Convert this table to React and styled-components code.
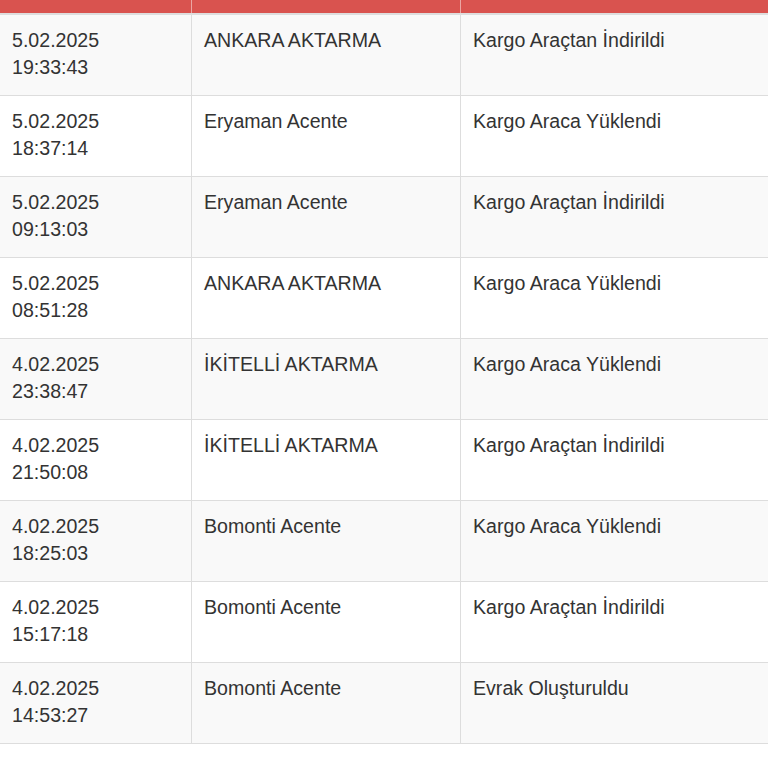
import React from "react";
import styled, { createGlobalStyle } from "styled-components";

const GlobalStyle = createGlobalStyle`
  html, body {
    margin: 0;
    padding: 0;
    background: #fff;
  }
  body {
    font-family: "Liberation Sans", Arial, sans-serif;
  }
`;

const Table = styled.div`
  width: 768px;
  display: flex;
  flex-direction: column;
`;

const HeaderRow = styled.div`
  display: grid;
  grid-template-columns: 191px 269px 1fr;
  height: 13px;
  border-bottom: 2px solid #dedede;
`;

const HeaderCell = styled.div`
  background: #d9534f;
  border-left: ${(p) => (p.$first ? "none" : "1px solid #eba6a3")};
`;

const Row = styled.div`
  display: grid;
  grid-template-columns: 191px 269px 1fr;
  background: ${(p) => (p.$odd ? "#f9f9f9" : "#ffffff")};
  border-bottom: 1px solid #dddddd;
`;

const Cell = styled.div`
  padding: 12px 12px 14px;
  min-height: 54px;
  font-size: 19.6px;
  line-height: 27px;
  color: #333;
  border-left: ${(p) => (p.$first ? "none" : "1px solid #dddddd")};
`;

const rows = [
  ["5.02.2025", "19:33:43", "ANKARA AKTARMA", "Kargo Araçtan İndirildi"],
  ["5.02.2025", "18:37:14", "Eryaman Acente", "Kargo Araca Yüklendi"],
  ["5.02.2025", "09:13:03", "Eryaman Acente", "Kargo Araçtan İndirildi"],
  ["5.02.2025", "08:51:28", "ANKARA AKTARMA", "Kargo Araca Yüklendi"],
  ["4.02.2025", "23:38:47", "İKİTELLİ AKTARMA", "Kargo Araca Yüklendi"],
  ["4.02.2025", "21:50:08", "İKİTELLİ AKTARMA", "Kargo Araçtan İndirildi"],
  ["4.02.2025", "18:25:03", "Bomonti Acente", "Kargo Araca Yüklendi"],
  ["4.02.2025", "15:17:18", "Bomonti Acente", "Kargo Araçtan İndirildi"],
  ["4.02.2025", "14:53:27", "Bomonti Acente", "Evrak Oluşturuldu"],
];

export default function App() {
  return (
    <>
      <GlobalStyle />
      <Table>
        <HeaderRow>
          <HeaderCell $first />
          <HeaderCell />
          <HeaderCell />
        </HeaderRow>
        {rows.map(([date, time, place, status], i) => (
          <Row key={i} $odd={i % 2 === 0}>
            <Cell $first>
              {date}
              <br />
              {time}
            </Cell>
            <Cell>{place}</Cell>
            <Cell>{status}</Cell>
          </Row>
        ))}
      </Table>
    </>
  );
}
